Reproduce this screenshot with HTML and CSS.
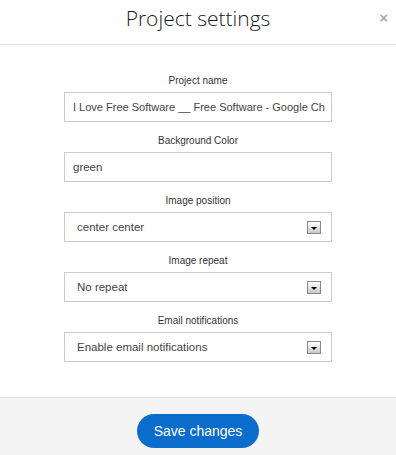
FILE: index.html
```html
<!DOCTYPE html>
<html lang="en">
  <head>
    <meta charset="UTF-8" />
    <title>Project settings</title>
    <link rel="stylesheet" href="styles.css">
  </head>
  <body>
    <div class="modal">
      <div class="modal-header">
        <h1>Project settings</h1>
        <span class="close">&times;</span>
      </div>

      <div class="modal-body">
        <div class="field">
          <label>Project name</label>
          <div class="box long">I Love Free Software __ Free Software - Google Ch</div>
        </div>

        <div class="field">
          <label>Background Color</label>
          <div class="box">green</div>
        </div>

        <div class="field">
          <label>Image position</label>
          <div class="box select">
            <span>center center</span>
            <span class="arrow"></span>
          </div>
        </div>

        <div class="field">
          <label>Image repeat</label>
          <div class="box select">
            <span>No repeat</span>
            <span class="arrow"></span>
          </div>
        </div>

        <div class="field">
          <label>Email notifications</label>
          <div class="box select">
            <span>Enable email notifications</span>
            <span class="arrow"></span>
          </div>
        </div>
      </div>

      <div class="modal-footer">
        <button>Save changes</button>
      </div>
    </div>
  </body>
</html>
```

FILE: styles.css
```css
body {
  margin: 0;
  font-family: "Liberation Sans", Arial, sans-serif;
  background-color: white;
}
.modal {
  width: 396px;
  height: 455px;
  display: flex;
  flex-direction: column;
  overflow: hidden;
}
.modal-header {
  position: relative;
  height: 44px;
  border-bottom: 1px solid #e5e5e5;
  text-align: center;
}
.modal-header h1 {
  margin: 0;
  font-family: "Open Sans", sans-serif;
  font-weight: 300;
  font-size: 21px;
  line-height: 36px;
  color: #1a1a1a;
}
.close {
  position: absolute;
  right: 8px;
  top: 9px;
  font-size: 15px;
  font-weight: bold;
  color: #aaa;
}
.modal-body {
  flex: 1;
  padding: 30px 64px 0;
}
.field {
  margin-bottom: 13px;
}
.field label {
  display: block;
  text-align: center;
  font-size: 10px;
  color: #333;
  line-height: 12px;
  margin-bottom: 5px;
}
.box {
  height: 28px;
  border: 1px solid #ccc;
  padding: 0 8px;
  font-size: 11.5px;
  line-height: 28px;
  color: #444;
  white-space: nowrap;
  overflow: hidden;
}
.box.long {
  font-size: 11px;
}
.select {
  display: flex;
  justify-content: space-between;
  align-items: center;
  padding: 0 10px 0 12px;
}
.arrow {
  position: relative;
  width: 12px;
  height: 11px;
  border: 1px solid #888;
  background: linear-gradient(#fff, #c8c8c8);
}
.arrow::after {
  content: "";
  position: absolute;
  left: 3px;
  top: 5px;
  border-left: 3px solid transparent;
  border-right: 3px solid transparent;
  border-top: 3px solid #000;
}
.modal-footer {
  height: 57px;
  background-color: #f4f4f4;
  border-top: 1px solid #e0e0e0;
  display: flex;
  justify-content: center;
  align-items: center;
}
button {
  width: 122px;
  height: 34px;
  margin-top: 9px;
  border: none;
  border-radius: 17px;
  background-color: #0a6ccb;
  color: white;
  font-family: "Liberation Sans", Arial, sans-serif;
  font-size: 14px;
}
```
